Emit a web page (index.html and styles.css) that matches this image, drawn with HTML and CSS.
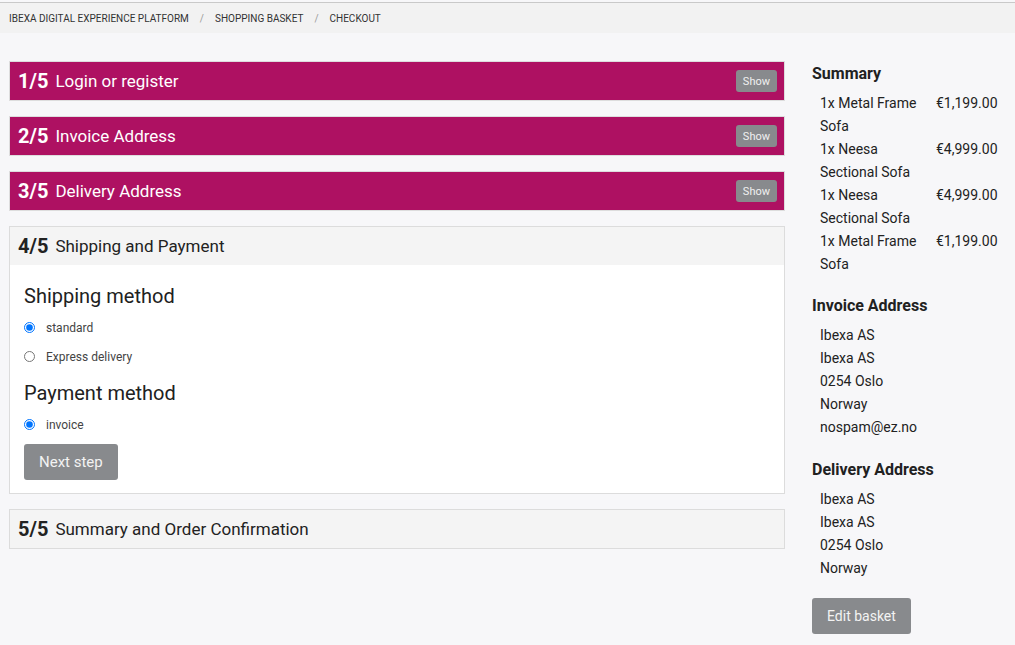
FILE: index.html
```html
<!DOCTYPE html>
<html>
<head>
<meta charset="utf-8">
<link rel="stylesheet" href="styles.css">
</head>
<body>
<div class="crumbs">
  <span>Ibexa Digital Experience Platform</span><span class="sep">/</span><span>Shopping Basket</span><span class="sep">/</span><span>Checkout</span>
</div>
<div class="main">
  <div class="steps">
    <div class="panel done">
      <div class="ph"><span class="num">1/5</span><span class="title">Login or register</span><button class="show">Show</button></div>
    </div>
    <div class="panel done">
      <div class="ph"><span class="num">2/5</span><span class="title">Invoice Address</span><button class="show">Show</button></div>
    </div>
    <div class="panel done">
      <div class="ph"><span class="num">3/5</span><span class="title">Delivery Address</span><button class="show">Show</button></div>
    </div>
    <div class="panel">
      <div class="ph"><span class="num">4/5</span><span class="title">Shipping and Payment</span></div>
      <div class="pb">
        <h2>Shipping method</h2>
        <label class="opt"><input type="radio" name="ship" checked><span>standard</span></label>
        <label class="opt"><input type="radio" name="ship"><span>Express delivery</span></label>
        <h2 class="pm">Payment method</h2>
        <label class="opt pay"><input type="radio" name="pay" checked><span>invoice</span></label>
        <button class="btn">Next step</button>
      </div>
    </div>
    <div class="panel">
      <div class="ph"><span class="num">5/5</span><span class="title">Summary and Order Confirmation</span></div>
    </div>
  </div>
  <div class="side">
    <h3>Summary</h3>
    <div class="items">
      <div class="item"><span class="name">1x Metal Frame Sofa</span><span class="price">€1,199.00</span></div>
      <div class="item"><span class="name">1x Neesa Sectional Sofa</span><span class="price">€4,999.00</span></div>
      <div class="item"><span class="name">1x Neesa Sectional Sofa</span><span class="price">€4,999.00</span></div>
      <div class="item"><span class="name">1x Metal Frame Sofa</span><span class="price">€1,199.00</span></div>
    </div>
    <h3>Invoice Address</h3>
    <div class="addr">
      <div>Ibexa AS</div><div>Ibexa AS</div><div>0254 Oslo</div><div>Norway</div><div>nospam@ez.no</div>
    </div>
    <h3>Delivery Address</h3>
    <div class="addr last">
      <div>Ibexa AS</div><div>Ibexa AS</div><div>0254 Oslo</div><div>Norway</div>
    </div>
    <button class="btn edit">Edit basket</button>
  </div>
</div>
</body>
</html>
```
FILE: styles.css
```css
html, body { margin: 0; padding: 0; }
body {
  background: #f7f7f9;
  font-family: Roboto, "Liberation Sans", sans-serif;
  color: #212121;
  padding-top: 2px;
}
.crumbs {
  border-top: 1px solid #c9c9c9;
  background: #f2f2f2;
  height: 30px;
  display: flex;
  align-items: center;
  padding-left: 9px;
  font-size: 10px;
  text-transform: uppercase;
  color: #333;
}
.crumbs .sep { color: #999; margin: 0 11px; }
.main {
  display: flex;
  padding: 28px 0 0 9px;
  gap: 27px;
}
.steps { width: 776px; display: flex; flex-direction: column; gap: 15px; }
.panel { border: 1px solid #dcdcdc; background: #fff; }
.ph {
  height: 38px;
  display: flex;
  align-items: center;
  padding: 0 7px 0 8px;
  background: #f4f4f4;
  color: #222;
}
.panel.done { border-color: #ddd; }
.panel.done .ph { background: #ae1162; color: #fff; }
.num { font-size: 20px; font-weight: 700; margin-right: 7px; }
.title { font-size: 17px; flex: 1; }
.show {
  background: #888a8d;
  color: #f0f0f0;
  border: 0;
  border-radius: 3px;
  font-family: Roboto, "Liberation Sans", sans-serif;
  font-size: 11px;
  height: 22px;
  padding: 0 7px;
}
.pb { padding: 19px 14px 13px 14px; }
h2 { font-size: 20px; font-weight: 400; margin: 0 0 11px; line-height: 24px; }
h2.pm { margin-top: 16px; margin-bottom: 11px; }
.opt { display: flex; align-items: center; font-size: 12px; color: #444; height: 17px; margin-bottom: 12px; }
.opt.pay { margin-bottom: 11px; }
.opt input { margin: 0 11px 0 0; width: 11px; height: 11px; }
.btn {
  background: #888a8d;
  color: #f3f3f3;
  border: 0;
  border-radius: 3px;
  font-family: Roboto, "Liberation Sans", sans-serif;
  font-size: 15px;
  height: 36px;
  padding: 0 15px;
  display: block;
}
.side { width: 190px; padding-top: 3px; }
h3 { font-size: 16px; font-weight: 700; margin: 0 0 8px; line-height: 20px; }
.items, .addr { padding-left: 8px; font-size: 14px; line-height: 23px; color: #222; margin-bottom: 20px; }
.addr { margin-bottom: 21px; }
.addr.last { margin-bottom: 18px; }
.item { display: flex; }
.name { width: 116px; }
h3 + .addr { margin-top: 1px; }
.edit { font-size: 14px; padding: 0 15px; height: 36px; margin-top: 0; }
```
